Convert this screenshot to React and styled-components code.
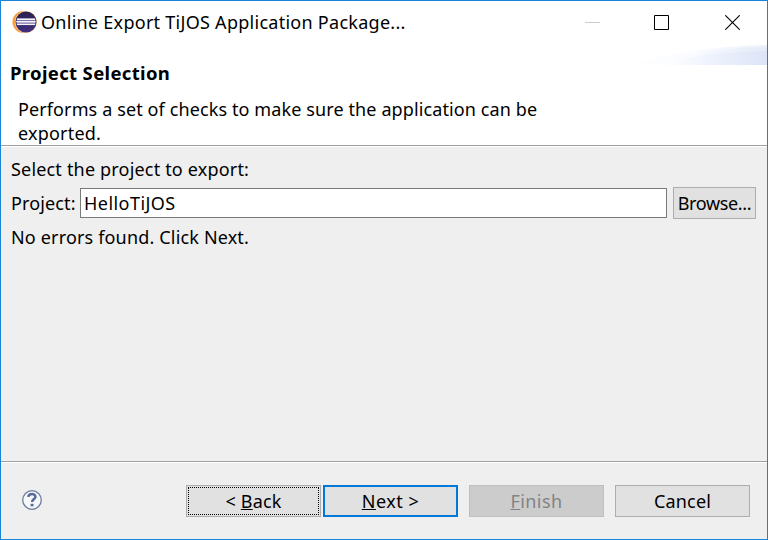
import React from "react";
import styled, { createGlobalStyle, css } from "styled-components";

const GlobalStyle = createGlobalStyle`
  * { box-sizing: border-box; }
  body { margin: 0; overflow: hidden; }
`;

const Window = styled.div`
  display: flex;
  flex-direction: column;
  width: 768px;
  height: 540px;
  border: 1px solid #1883d7;
  background: #efefef;
  color: #000;
  font: 400 18px/24px "Noto Sans", "Open Sans", sans-serif;
  white-space: nowrap;
`;

const Label = styled.span`
  letter-spacing: ${(p) => p.$tracking || 0}px;
`;

const TitleBar = styled.header`
  display: flex;
  align-items: center;
  height: 44px;
  padding: 0 27px 2px 11px;
  background: #fff;
`;

const Title = styled(Label)`
  flex: 1;
  margin-left: 4px;
`;

const WindowControls = styled.div`
  display: flex;
  gap: 54px;
  height: 15px;
  margin-top: 1px;

  svg { display: block; }
  svg:last-child { margin-left: 2px; }
`;

const Banner = styled.section`
  display: flex;
  justify-content: space-between;
  height: 100px;
  background: #fff;
`;

const BannerText = styled.div`
  padding: 16px 0 0 9px;
`;

const Heading = styled.h1`
  margin: 0;
  font-size: 18.5px;
  line-height: 24px;
  font-weight: 700;
  letter-spacing: 0.34px;
`;

const Description = styled.p`
  display: flex;
  flex-direction: column;
  margin: 12px 0 0 8px;
`;

const Separator = styled.div`
  flex: none;
  height: 2px;
  background: #fff;
  border-top: 1px solid #a0a0a0;
`;

const Content = styled.main`
  display: flex;
  flex-direction: column;
  flex: 1;
  padding: 10px 11px 0 10px;
`;

const ProjectRow = styled.div`
  display: flex;
  align-items: center;
  height: 32px;
  margin: 6px 0;
`;

const FieldLabel = styled(Label)`
  width: 69px;
`;

const TextField = styled.div`
  flex: 1;
  height: 30px;
  margin-right: 6px;
  padding: 2px 3px;
  border: 1px solid #7a7a7a;
  background: #fff;
`;

const Footer = styled.footer`
  display: flex;
  align-items: center;
  height: 76px;
  padding: 0 17px 0 20px;
`;

const ButtonRow = styled.div`
  display: flex;
  margin-left: auto;
  gap: 11px;
`;

const ButtonPair = styled.div`
  display: flex;
  gap: 2px;
`;

const Button = styled.button`
  width: ${(p) => p.$width || 135}px;
  height: 32px;
  padding: 0;
  border: 1px solid #adadad;
  border-radius: 0;
  background: #e1e1e1;
  color: #000;
  font: inherit;
  letter-spacing: ${(p) => p.$tracking || 0}px;

  ${(p) => p.$focused && css`
    padding: 1px;
  `}

  ${(p) => p.$primary && css`
    border: 2px solid #0078d7;
  `}

  &:disabled {
    border-color: #bfbfbf;
    background: #ccc;
    color: #838383;
  }
`;

const FocusFrame = styled.span`
  display: flex;
  align-items: center;
  justify-content: center;
  height: 28px;
  border: 1px dotted #000;
  white-space: pre;
`;

const Mnemonic = styled.span`
  text-decoration: underline 1px;
  text-underline-offset: 1px;
  text-decoration-skip-ink: none;
`;

const HelpSvg = styled.svg`
  margin-bottom: 2px;
`;

const EclipseIcon = () => (
  <svg width="25" height="24" viewBox="0 0 25 24">
    <defs>
      <linearGradient id="moon" x1="0" y1="0" x2="0" y2="1">
        <stop offset="0" stopColor="#28204c" />
        <stop offset="1" stopColor="#413080" />
      </linearGradient>
    </defs>
    <circle cx="11.3" cy="12" r="10.9" fill="#f8a040" />
    <circle cx="14" cy="12" r="11" fill="#fbd9ae" />
    <circle cx="14" cy="12" r="10.5" fill="url(#moon)" />
    <path d="M4.6 8.4h18.8v6.8H4.6Z" fill="#7d75aa" />
    <path d="M5 9.2h18M4.4 11.8h19.2M5 14.4h18" stroke="#f5f4fa" strokeWidth="1.4" />
  </svg>
);

const BannerSwoosh = () => (
  <svg width="139" height="21" viewBox="0 0 139 21">
    <defs>
      <linearGradient id="swooshBack" gradientUnits="userSpaceOnUse" x1="0" x2="139" y1="0" y2="0">
        <stop offset="0" stopColor="#fff" />
        <stop offset="0.5" stopColor="#f9fbff" />
        <stop offset="1" stopColor="#ecf1fb" />
      </linearGradient>
      <linearGradient id="swooshFront" gradientUnits="userSpaceOnUse" x1="40" x2="139" y1="0" y2="0">
        <stop offset="0" stopColor="#f7f9fe" stopOpacity="0" />
        <stop offset="0.5" stopColor="#eaeffb" stopOpacity="0.8" />
        <stop offset="1" stopColor="#dde4f6" />
      </linearGradient>
    </defs>
    <path d="M0 20Q62 2 139 0V20Z" fill="url(#swooshBack)" />
    <path d="M44 20Q78 2 139 2V20Z" fill="url(#swooshFront)" fillOpacity="0.5" />
    <path d="M30 20Q82 6 139 6V20Z" fill="url(#swooshFront)" />
  </svg>
);

const HelpIcon = () => (
  <HelpSvg width="22" height="22" viewBox="0 0 22 22" fill="none">
    <circle cx="11" cy="11" r="9.3" fill="#f6f7f9" stroke="#6c7e9f" strokeWidth="1.3" />
    <path d="M7.3 7.8C7.8 4 14.4 4 14.4 7.8c0 2.5-3.3 2.6-3.3 5.2" stroke="#566b96" strokeWidth="2.5" />
    <path d="M9.6 14.8h2.9v2.5H9.6Z" fill="#566b96" />
  </HelpSvg>
);

export default function App() {
  return (
    <>
      <GlobalStyle />
      <Window>
        <TitleBar>
          <EclipseIcon />
          <Title $tracking={0.27}>Online Export TiJOS Application Package...</Title>
          <WindowControls>
            <svg width="15" height="15"><path d="M0 7.5h15" stroke="#ccc" /></svg>
            <svg width="15" height="15"><path d="M.5.5h14v14H.5Z" fill="none" stroke="#000" /></svg>
            <svg width="15" height="15"><path d="m.3.3 14.4 14.4M14.7.3.3 14.7" stroke="#000" strokeWidth="1.1" /></svg>
          </WindowControls>
        </TitleBar>
        <Banner>
          <BannerText>
            <Heading>Project Selection</Heading>
            <Description>
              <Label $tracking={0.113}>Performs a set of checks to make sure the application can be</Label>
              <Label $tracking={0.2}>exported.</Label>
            </Description>
          </BannerText>
          <BannerSwoosh />
        </Banner>
        <Separator />
        <Content>
          <Label $tracking={0.18}>Select the project to export:</Label>
          <ProjectRow>
            <FieldLabel $tracking={0.12}>Project:</FieldLabel>
            <TextField><Label $tracking={0.45}>HelloTiJOS</Label></TextField>
            <Button $width={83} $tracking={-0.36}>Browse...</Button>
          </ProjectRow>
          <Label $tracking={0.167}>No errors found. Click Next.</Label>
        </Content>
        <Separator />
        <Footer>
          <HelpIcon />
          <ButtonRow>
            <ButtonPair>
              <Button $focused $tracking={0.2}>
                <FocusFrame>{"< "}<Mnemonic>B</Mnemonic>ack</FocusFrame>
              </Button>
              <Button $primary $tracking={0.5}><Mnemonic>N</Mnemonic>ext &gt;</Button>
            </ButtonPair>
            <Button disabled $tracking={0.4}><Mnemonic>F</Mnemonic>inish</Button>
            <Button $tracking={0.2}>Cancel</Button>
          </ButtonRow>
        </Footer>
      </Window>
    </>
  );
}
